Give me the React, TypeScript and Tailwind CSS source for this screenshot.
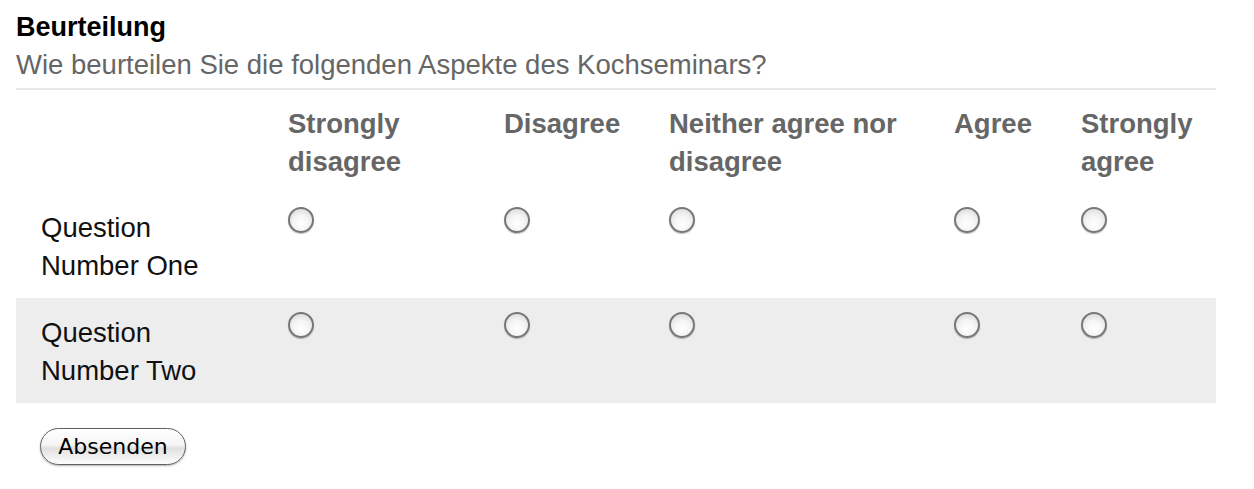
const columns = ["Strongly disagree", "Disagree", "Neither agree nor disagree", "Agree", "Strongly agree"];

const questions = ["Question Number One", "Question Number Two"];

const Radio = () => (
  <span className="block h-[26px] w-[26px] rounded-full border-2 border-[#777] bg-[radial-gradient(circle_at_50%_65%,#ffffff_0%,#f4f4f4_45%,#d2d2d2_100%)] shadow-[0_1px_1px_rgba(0,0,0,0.25)]" />
);

export default function App() {
  return (
    <div className="min-h-screen w-[1232px] bg-white px-[16px] pt-[12px] font-['Liberation_Sans',Arial,sans-serif]">
      <h2 className="text-[27px] leading-[30px] font-bold text-black">Beurteilung</h2>
      <p className="mt-[8px] text-[27.5px] leading-[30px] text-[#666]">Wie beurteilen Sie die folgenden Aspekte des Kochseminars?</p>
      <div className="mt-[8px] h-[2px] bg-[#e8e8e8]" />

      <div className="grid grid-cols-[272px_216px_165px_285px_127px_135px] text-[27.5px] leading-[38px]">
        <div className="h-[103px]" />
        {columns.map((c) => (
          <div key={c} className="h-[103px] pt-[15px] pr-[20px] font-bold text-[#666]">
            {c}
          </div>
        ))}

        {questions.map((q, i) => (
          <div key={q} className={"col-span-6 grid grid-cols-subgrid h-[105px] " + (i % 2 === 1 ? "bg-[#ededed]" : "")}>
            <div className="pl-[25px] pt-[16px] text-[#111]">
              <span className="block max-w-[180px]">{q}</span>
            </div>
            {columns.map((c) => (
              <div key={c} className="pt-[14px]">
                <Radio />
              </div>
            ))}
          </div>
        ))}
      </div>

      <div className="pl-[24px] pt-[25px]">
        <button className="h-[37px] w-[146px] rounded-full border border-[#606060] bg-[linear-gradient(#ffffff_0%,#f5f5f5_45%,#e0e0e0_55%,#fdfdfd_100%)] font-['DejaVu_Sans',sans-serif] text-[22px] leading-[34px] text-black shadow-[0_1px_2px_rgba(0,0,0,0.3)]">
          Absenden
        </button>
      </div>
    </div>
  );
}
